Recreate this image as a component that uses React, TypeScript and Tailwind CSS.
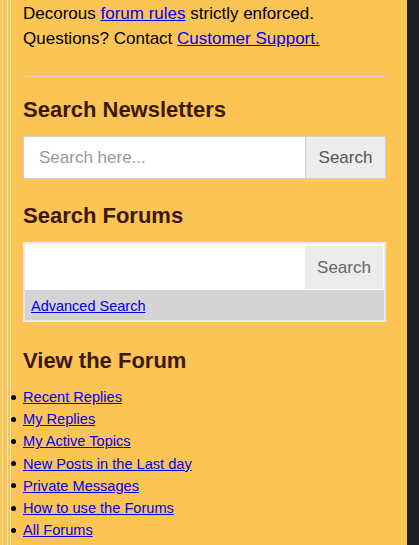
const links = [
  "Recent Replies",
  "My Replies",
  "My Active Topics",
  "New Posts in the Last day",
  "Private Messages",
  "How to use the Forums",
  "All Forums",
];

function Heading({ children }: { children: React.ReactNode }) {
  return (
    <h2 className="text-[22px] leading-[26px] font-bold text-[#3a180a]">{children}</h2>
  );
}

export default function App() {
  return (
    <div
      className="flex w-[419px] h-[545px] overflow-hidden bg-[#fcc355]"
      style={{ fontFamily: '"Liberation Sans", Arial, sans-serif' }}
    >
      {/* left edge stripes */}
      <div className="flex w-[11px] shrink-0">
        <div className="w-[2px]" />
        <div className="w-[1px] bg-[#fde7bc]" />
        <div className="w-[4px]" />
        <div className="w-[1px] bg-[#fde7bc]" />
        <div className="w-[2px]" />
        <div className="w-[1px] bg-[#fde7bc]" />
      </div>

      <div className="w-[396px] shrink-0 pl-[12px] pr-[21px] pt-[1px]">
        <p className="text-[17px] leading-[25px] text-black">
          Decorous{" "}
          <a href="#" className="text-[#0000ee] underline">
            forum rules
          </a>{" "}
          strictly enforced.
          <br />
          Questions? Contact{" "}
          <a href="#" className="text-[#0000ee] underline">
            Customer Support.
          </a>
        </p>

        <hr className="mt-[25px] border-0 border-t border-[#d9d2c4]" />

        <div className="mt-[20px]">
          <Heading>Search Newsletters</Heading>
          <div className="mt-[13px] flex h-[43px] w-[363px] border border-[#cfcfcf] bg-white">
            <input
              type="text"
              placeholder="Search here..."
              className="min-w-0 flex-1 bg-white pl-[15px] text-[17px] text-[#333] outline-none placeholder:text-[#999]"
            />
            <button className="w-[80px] border-l border-[#cfcfcf] bg-[#ececec] text-[17px] text-[#555]">
              Search
            </button>
          </div>
        </div>

        <div className="mt-[24px]">
          <Heading>Search Forums</Heading>
          <div className="mt-[13px] w-[363px] border-2 border-[#e8e8e8]">
            <div className="flex h-[46px] bg-white pt-[2px] pr-[1px] pb-[1px]">
              <input type="text" className="min-w-0 flex-1 outline-none" />
              <button className="w-[78px] bg-[#ececec] text-[17px] text-[#666]">Search</button>
            </div>
            <div className="flex h-[30px] items-center bg-[#d4d4d4] pl-[6px] pt-[4px]">
              <a href="#" className="text-[14.5px] text-[#0000ee] underline">
                Advanced Search
              </a>
            </div>
          </div>
        </div>

        <div className="mt-[26px]">
          <Heading>View the Forum</Heading>
          <ul className="-ml-[12px] mt-[12px] text-[14.6px] leading-[22.2px] text-black">
            {links.map((l) => (
              <li key={l} className="flex items-center">
                <span className="mr-[7px] h-[5px] w-[5px] rounded-full bg-black" />
                <a href="#" className="text-[#0000ee] underline">
                  {l}
                </a>
              </li>
            ))}
          </ul>
        </div>
      </div>

      <div className="flex-1 bg-[#1f2124]" />
    </div>
  );
}
